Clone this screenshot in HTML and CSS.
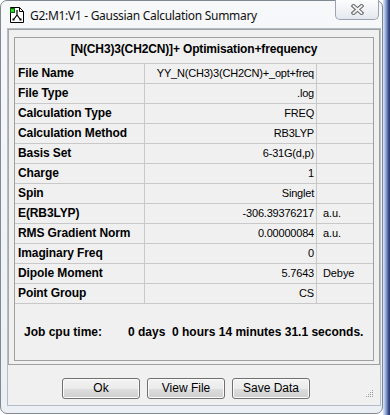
FILE: index.html
```html
<!DOCTYPE html>
<html>
<head>
<meta charset="utf-8">
<link rel="stylesheet" href="styles.css">
</head>
<body>
<div class="screen">
  <div class="window">
    <div class="titlebar">
      <svg class="appicon" width="14" height="16" viewBox="0 0 14 16">
        <path d="M0.5 0.5 H9.5 L13.5 4.5 V15.5 H0.5 Z" fill="#ffffff" stroke="#000" stroke-width="1"/>
        <path d="M9.5 0.5 V4.5 H13.5" fill="none" stroke="#000" stroke-width="1"/>
        <rect x="0.5" y="1.5" width="4" height="4" fill="#22dd22" stroke="#106010" stroke-width="1"/>
        <path d="M7 3 V8 M7 8 L4 12 M7 8 L10 12" stroke="#000" stroke-width="1.2" fill="none"/>
        <rect x="2.5" y="11.5" width="2" height="2" fill="#000"/>
        <rect x="9.5" y="11.5" width="2" height="2" fill="#000"/>
      </svg>
      <span class="title">G2:M1:V1 - Gaussian Calculation Summary</span>
      <div class="close">
        <svg width="13" height="11" viewBox="0 0 13 11">
          <path d="M2.5 2 L10.5 9 M10.5 2 L2.5 9" stroke="#707070" stroke-width="4" stroke-linecap="square" fill="none"/>
          <path d="M2.5 2 L10.5 9 M10.5 2 L2.5 9" stroke="#f4f4f4" stroke-width="1.8" stroke-linecap="square" fill="none"/>
        </svg>
      </div>
    </div>
    <div class="client">
      <div class="scrollframe">
        <div class="panel">
          <div class="heading">[N(CH3)3(CH2CN)]+ Optimisation+frequency</div>
          <div class="grid">
            <div class="lbl">File Name</div><div class="val">YY_N(CH3)3(CH2CN)+_opt+freq</div><div class="unit"></div>
            <div class="lbl">File Type</div><div class="val">.log</div><div class="unit"></div>
            <div class="lbl">Calculation Type</div><div class="val">FREQ</div><div class="unit"></div>
            <div class="lbl">Calculation Method</div><div class="val">RB3LYP</div><div class="unit"></div>
            <div class="lbl">Basis Set</div><div class="val">6-31G(d,p)</div><div class="unit"></div>
            <div class="lbl">Charge</div><div class="val">1</div><div class="unit"></div>
            <div class="lbl">Spin</div><div class="val">Singlet</div><div class="unit"></div>
            <div class="lbl">E(RB3LYP)</div><div class="val">-306.39376217</div><div class="unit">a.u.</div>
            <div class="lbl">RMS Gradient Norm</div><div class="val">0.00000084</div><div class="unit">a.u.</div>
            <div class="lbl">Imaginary Freq</div><div class="val">0</div><div class="unit"></div>
            <div class="lbl">Dipole Moment</div><div class="val">5.7643</div><div class="unit">Debye</div>
            <div class="lbl">Point Group</div><div class="val">CS</div><div class="unit"></div>
          </div>
          <div class="cpu">
            <span class="cpu-label">Job cpu time:</span>
            <span class="cpu-value">0 days  0 hours 14 minutes 31.1 seconds.</span>
          </div>
        </div>
      </div>
      <div class="buttons">
        <button class="btn">Ok</button>
        <button class="btn">View File</button>
        <button class="btn">Save Data</button>
        <svg class="grip" width="8" height="8" viewBox="0 0 8 8">
          <rect x="6" y="0" width="1" height="1" fill="#9a9a9a"/>
          <rect x="4" y="2" width="1" height="1" fill="#9a9a9a"/>
          <rect x="6" y="2" width="1" height="1" fill="#9a9a9a"/>
          <rect x="2" y="4" width="1" height="1" fill="#9a9a9a"/>
          <rect x="4" y="4" width="1" height="1" fill="#9a9a9a"/>
          <rect x="6" y="4" width="1" height="1" fill="#9a9a9a"/>
          <rect x="0" y="6" width="1" height="1" fill="#9a9a9a"/>
          <rect x="2" y="6" width="1" height="1" fill="#9a9a9a"/>
          <rect x="4" y="6" width="1" height="1" fill="#9a9a9a"/>
          <rect x="6" y="6" width="1" height="1" fill="#9a9a9a"/>
        </svg>
      </div>
    </div>
  </div>
  <div class="desktop"></div>
</div>
</body>
</html>
```

FILE: styles.css
```css
* { box-sizing: border-box; }
html, body { margin: 0; padding: 0; }
body {
  width: 390px;
  height: 415px;
  background: #ffffff;
  overflow: hidden;
  font-family: "Liberation Sans", Arial, sans-serif;
  color: #000;
}
.screen {
  display: flex;
  width: 390px;
  height: 415px;
}
.window {
  width: 383px;
  height: 414px;
  border: 1px solid #7f8893;
  border-radius: 7px;
  background: linear-gradient(to bottom, #f6f8fa, #eceff3);
  padding: 0 1px 7px 6px;
  display: flex;
  flex-direction: column;
  flex: none;
}
.titlebar {
  height: 27px;
  display: flex;
  align-items: flex-start;
  flex: none;
}
.appicon {
  margin-left: 3px;
  margin-top: 6px;
  flex: none;
}
.title {
  margin-left: 6px;
  margin-top: 6px;
  font-family: "Noto Sans", "Open Sans", sans-serif;
  font-size: 12px;
  line-height: 17px;
  letter-spacing: -0.3px;
  color: #111;
  flex: 1;
  white-space: nowrap;
}
.close {
  width: 44px;
  height: 20px;
  margin-top: -1px;
  margin-right: 2px;
  border: 1px solid #9aa4b0;
  border-top: none;
  border-radius: 0 0 5px 5px;
  background: linear-gradient(to bottom, #fdfdfe, #e4e8ee);
  display: flex;
  align-items: center;
  justify-content: center;
  flex: none;
}
.client {
  flex: 1;
  border: 1px solid #b4bcc6;
  background: #f0f0f0;
  display: flex;
  flex-direction: column;
}
.scrollframe {
  height: 336px;
  border: 1px solid #a0a0a0;
  border-left-color: #a8a8a8;
  padding: 7px 5px 3px 5px;
  flex: none;
}
.panel {
  height: 324px;
  border: 1px solid #a0a0a0;
  display: flex;
  flex-direction: column;
}
.heading {
  height: 26px;
  border-bottom: 1px solid #c8c8c8;
  font-weight: bold;
  font-size: 12px;
  line-height: 23px;
  text-align: center;
  letter-spacing: -0.15px;
  flex: none;
}
.grid {
  display: grid;
  grid-template-columns: 130px 172px 56px;
  grid-auto-rows: 20px;
  flex: none;
}
.grid > div {
  border-bottom: 1px solid #c8c8c8;
  white-space: nowrap;
  line-height: 19px;
}
.lbl {
  border-right: 1px solid #c8c8c8;
  padding-left: 3px;
  font-weight: bold;
  font-size: 12px;
  letter-spacing: -0.1px;
}
.val {
  border-right: 1px solid #c8c8c8;
  padding-right: 2px;
  text-align: right;
  font-size: 11px;
  letter-spacing: -0.2px;
}
.unit {
  padding-left: 6px;
  font-size: 11px;
  letter-spacing: -0.1px;
}
.cpu {
  flex: 1;
  display: flex;
  align-items: center;
  padding-left: 9px;
  font-weight: bold;
  font-size: 12px;
}
.cpu-label {
  width: 104px;
  flex: none;
}
.cpu-value {
  white-space: pre;
}
.buttons {
  display: flex;
  align-items: flex-start;
  gap: 7px;
  padding-left: 54px;
  margin-top: 13px;
}
.btn {
  width: 78px;
  height: 21px;
  border: 1px solid #707070;
  border-radius: 3px;
  background: linear-gradient(to bottom, #f3f3f3 0%, #ebebeb 50%, #dddddd 51%, #cfcfcf 100%);
  font-family: "Liberation Sans", Arial, sans-serif;
  font-size: 12px;
  color: #000;
  padding: 0;
  line-height: 19px;
  box-shadow: inset 0 0 0 1px #fbfbfb;
}
.grip {
  margin-left: auto;
  margin-right: 6px;
  margin-top: 12px;
}
.desktop {
  flex: 1;
  background: linear-gradient(to right, #dde7f3 0%, #a7bde0 30%, #6f88c4 55%, #3a4a86 80%, #2c386e 100%);
}
```
